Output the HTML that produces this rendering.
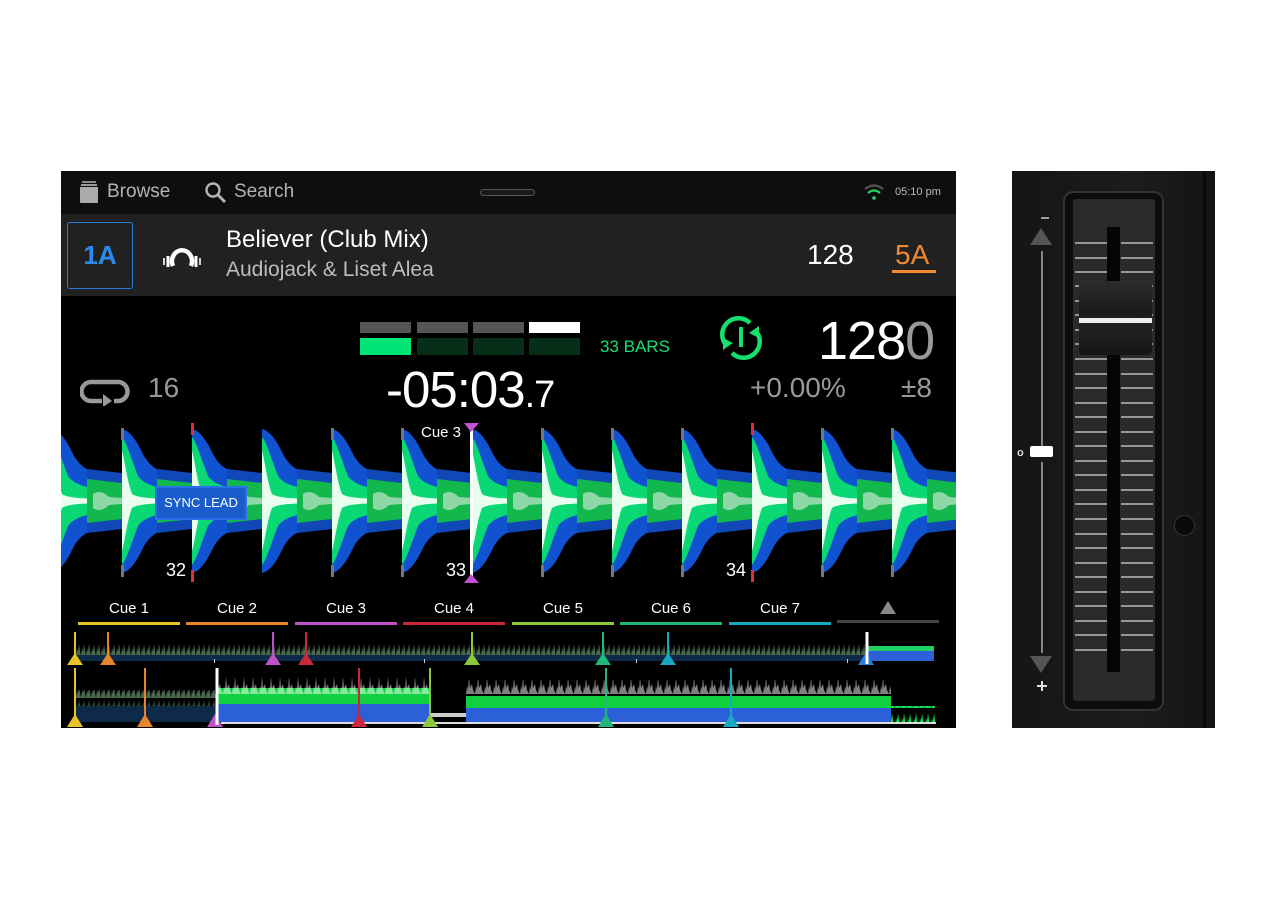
<!DOCTYPE html>
<html><head><meta charset="utf-8"><style>
body{margin:0;width:1280px;height:900px;background:#fff;position:relative;overflow:hidden;font-family:"Liberation Sans","DejaVu Sans",sans-serif}
.a{position:absolute;white-space:nowrap}
</style></head><body>
<div class="a" style="left:61px;top:171px;width:895px;height:557px;background:#000"></div>
<div class="a" style="left:61px;top:171px;width:895px;height:43px;background:#0e0e0e"></div>
<div class="a" style="left:61px;top:214px;width:895px;height:82px;background:#212121"></div>

<!-- header -->
<svg class="a" style="left:78px;top:180px" width="22" height="24"><rect x="4" y="1" width="14" height="2" fill="#888"/><rect x="3" y="4" width="16" height="2" fill="#999"/><rect x="2" y="7" width="18" height="16" rx="1" fill="#aaa"/></svg>
<div class="a" style="left:107px;top:181px;font-size:19px;color:#b4b4b4">Browse</div>
<svg class="a" style="left:204px;top:181px" width="24" height="24"><circle cx="9" cy="9" r="6.5" fill="none" stroke="#b4b4b4" stroke-width="2.4"/><line x1="14" y1="14" x2="21" y2="21" stroke="#b4b4b4" stroke-width="2.8"/></svg>
<div class="a" style="left:234px;top:181px;font-size:19px;color:#b4b4b4">Search</div>
<div class="a" style="left:480px;top:189px;width:53px;height:5px;border:1px solid #555;border-radius:4px;background:#1a1a1a"></div>
<svg class="a" style="left:863px;top:183px" width="22" height="18"><path d="M2 6 Q11 -1 20 6" fill="none" stroke="#555" stroke-width="2.2"/><path d="M5 10 Q11 5 17 10" fill="none" stroke="#1ed760" stroke-width="2.2"/><circle cx="11" cy="15" r="1.8" fill="#1ed760"/></svg>
<div class="a" style="left:895px;top:186px;font-size:11px;color:#bbb">05:10 pm</div>

<!-- track -->
<div class="a" style="left:67px;top:222px;width:66px;height:67px;border:1.5px solid #2a7ad8;border-radius:3px;box-sizing:border-box;color:#2a8af0;font-size:26px;font-weight:bold;line-height:64px;text-align:center">1A</div>
<svg class="a" style="left:160px;top:240px" width="44" height="32"><path d="M13 26 A10 11 0 1 1 31 26" fill="none" stroke="#fff" stroke-width="4.5"/><path d="M8 16 L8 27 M36 16 L36 27" stroke="#fff" stroke-width="3"/><path d="M4 18 L4 25 M40 18 L40 25" stroke="#fff" stroke-width="1.6"/></svg>
<div class="a" style="left:226px;top:226px;font-size:24px;color:#fff">Believer (Club Mix)</div>
<div class="a" style="left:226px;top:258px;font-size:21px;color:#bdbdbd">Audiojack &amp; Liset Alea</div>
<div class="a" style="left:807px;top:239px;font-size:28px;color:#fff">128</div>
<div class="a" style="left:895px;top:239px;font-size:28px;color:#f08a30">5A</div>
<div class="a" style="left:892px;top:270px;width:44px;height:3px;background:#f08a30"></div>

<!-- meters -->
<div class="a" style="left:360px;top:322px;width:51px;height:11px;background:#555"></div>
<div class="a" style="left:417px;top:322px;width:51px;height:11px;background:#555"></div>
<div class="a" style="left:473px;top:322px;width:51px;height:11px;background:#555"></div>
<div class="a" style="left:529px;top:322px;width:51px;height:11px;background:#fff"></div>
<div class="a" style="left:360px;top:338px;width:51px;height:17px;background:#00e676"></div>
<div class="a" style="left:417px;top:338px;width:51px;height:17px;background:#062e18"></div>
<div class="a" style="left:473px;top:338px;width:51px;height:17px;background:#062e18"></div>
<div class="a" style="left:529px;top:338px;width:51px;height:17px;background:#062e18"></div>
<div class="a" style="left:600px;top:337px;font-size:17px;color:#14e070">33 BARS</div>
<svg class="a" style="left:719px;top:316px" width="44" height="44"><path d="M8 30 A16 16 0 0 1 31 7" fill="none" stroke="#14e070" stroke-width="4.5"/><path d="M36 14 A16 16 0 0 1 13 37" fill="none" stroke="#14e070" stroke-width="4.5"/><path d="M40 10 L40 22 L30 17Z" fill="#14e070"/><path d="M4 34 L4 22 L14 27Z" fill="#14e070"/><rect x="20" y="11" width="4" height="20" fill="#14e070"/></svg>
<div class="a" style="left:818px;top:310px;font-size:54px;color:#fff;letter-spacing:-1px">128<span style="color:#999">0</span></div>
<div class="a" style="left:750px;top:372px;font-size:28px;color:#999">+0.00%</div>
<div class="a" style="left:901px;top:372px;font-size:28px;color:#999">±8</div>
<div class="a" style="left:386px;top:360px;font-size:51px;color:#fff;letter-spacing:-1px">-05:03<span style="font-size:38px">.7</span></div>
<svg class="a" style="left:80px;top:374px" width="52" height="32"><path d="M22 27 L11 27 A9 9 0 0 1 11 8 L38 8 A9 9 0 0 1 38 27 L34 27" fill="none" stroke="#999" stroke-width="4.5"/><path d="M23 20 L32 27 L23 33Z" fill="#999"/></svg>
<div class="a" style="left:148px;top:372px;font-size:28px;color:#999">16</div>

<!-- waveform -->
<svg class="a" style="left:61px;top:420px" width="895" height="170">
<defs>
<g id="p">
<path d="M0,-72 C8,-70 14,-62 22,-45 C30,-32 40,-26 70,-24 L70,24 C40,26 30,32 22,45 C14,62 8,70 0,72Z" fill="#1152d0"/>
<path d="M0,-64 C5,-58 10,-40 16,-25 C24,-14 40,-12 70,-11 L70,11 C40,12 24,14 16,25 C10,40 5,58 0,64Z" fill="#0ad874"/>
<path d="M0,-50 C3,-40 5,-20 10,-7 C16,-3 30,-2 70,-2 L70,2 C30,2 16,3 10,7 C5,20 3,40 0,50Z" fill="#e8fff0"/>
</g>
<g id="h">
<path d="M0,-32 L35,-28 L35,28 L0,32Z" fill="#1048b8"/>
<path d="M0,-22 L35,-18 L35,18 L0,22Z" fill="#12b84c"/>
<path d="M6,-7 C10,-10 16,-10 22,-4 L35,-3 L35,3 L22,4 C16,10 10,10 6,7Z" fill="#8ed8a8"/>
</g>
</defs>
<g transform="translate(0,81)">
<use href="#p" x="-9"/><use href="#h" x="26"/>
<use href="#p" x="61"/><use href="#h" x="96"/>
<use href="#p" x="131"/><use href="#h" x="166"/>
<use href="#p" x="201"/><use href="#h" x="236"/>
<use href="#p" x="271"/><use href="#h" x="306"/>
<use href="#p" x="341"/><use href="#h" x="376"/>
<use href="#p" x="411"/><use href="#h" x="446"/>
<use href="#p" x="481"/><use href="#h" x="516"/>
<use href="#p" x="551"/><use href="#h" x="586"/>
<use href="#p" x="621"/><use href="#h" x="656"/>
<use href="#p" x="691"/><use href="#h" x="726"/>
<use href="#p" x="761"/><use href="#h" x="796"/>
<use href="#p" x="831"/><use href="#h" x="866"/>
</g>
<g fill="#777">
<rect x="60" y="8" width="3" height="12"/><rect x="60" y="145" width="3" height="12"/>
<rect x="270" y="8" width="3" height="12"/><rect x="270" y="145" width="3" height="12"/>
<rect x="340" y="8" width="3" height="12"/><rect x="340" y="145" width="3" height="12"/>
<rect x="480" y="8" width="3" height="12"/><rect x="480" y="145" width="3" height="12"/>
<rect x="550" y="8" width="3" height="12"/><rect x="550" y="145" width="3" height="12"/>
<rect x="620" y="8" width="3" height="12"/><rect x="620" y="145" width="3" height="12"/>
<rect x="760" y="8" width="3" height="12"/><rect x="760" y="145" width="3" height="12"/>
<rect x="830" y="8" width="3" height="12"/><rect x="830" y="145" width="3" height="12"/>
</g>
<g fill="#e03030"><rect x="130" y="3" width="3" height="12"/><rect x="130" y="150" width="3" height="12"/><rect x="690" y="3" width="3" height="12"/><rect x="690" y="150" width="3" height="12"/></g>
<rect x="409" y="3" width="3" height="160" fill="#fff"/>
<path d="M403,3 L418,3 L410,12Z M403,163 L418,163 L410,154Z" fill="#c050d8"/>
</svg>
<div class="a" style="left:421px;top:424px;font-size:15px;color:#fff">Cue 3</div>
<div class="a" style="left:166px;top:560px;font-size:18px;color:#fff">32</div>
<div class="a" style="left:446px;top:560px;font-size:18px;color:#fff">33</div>
<div class="a" style="left:726px;top:560px;font-size:18px;color:#fff">34</div>
<div class="a" style="left:155px;top:486px;width:92px;height:34px;background:#1a5ccc;border:2px solid #2a70e8;box-sizing:border-box;color:#fff;font-size:13px;line-height:30px;text-align:center">SYNC LEAD</div>

<!-- cue row -->
<div class="a" style="left:78px;top:600px;width:860px;height:30px;font-size:15px;color:#fff">
<div class="a" style="left:0;width:102px;text-align:center">Cue 1<div style="height:3px;background:#e8c22a;margin-top:5px"></div></div>
<div class="a" style="left:108px;width:102px;text-align:center">Cue 2<div style="height:3px;background:#e8852a;margin-top:5px"></div></div>
<div class="a" style="left:217px;width:102px;text-align:center">Cue 3<div style="height:3px;background:#c050c8;margin-top:5px"></div></div>
<div class="a" style="left:325px;width:102px;text-align:center">Cue 4<div style="height:3px;background:#c8283a;margin-top:5px"></div></div>
<div class="a" style="left:434px;width:102px;text-align:center">Cue 5<div style="height:3px;background:#8cc83a;margin-top:5px"></div></div>
<div class="a" style="left:542px;width:102px;text-align:center">Cue 6<div style="height:3px;background:#20b878;margin-top:5px"></div></div>
<div class="a" style="left:651px;width:102px;text-align:center">Cue 7<div style="height:3px;background:#18a8c0;margin-top:5px"></div></div>
<div class="a" style="left:759px;width:102px;text-align:center"><span style="display:inline-block;width:0;height:0;border-left:8px solid transparent;border-right:8px solid transparent;border-bottom:13px solid #888;margin-top:1px"></span><div style="height:3px;background:#444;margin-top:2px"></div></div>
</div>

<!-- overviews -->
<svg class="a" style="left:61px;top:628px" width="895" height="100">
<defs>
<pattern id="sg" width="5" height="14" patternUnits="userSpaceOnUse"><path d="M0,14 L1,6 L2,10 L3,2 L4,9 L5,14Z" fill="#4a6a50"/></pattern>
<pattern id="sw" width="9" height="22" patternUnits="userSpaceOnUse"><path d="M0,22 L1,14 L2,18 L3,4 L4,16 L6,12 L7,18 L9,22Z" fill="#fff"/></pattern>
<pattern id="sgr" width="6" height="20" patternUnits="userSpaceOnUse"><path d="M0,20 L1,10 L2,14 L3,5 L4,12 L6,20Z" fill="#10e050"/></pattern>
</defs>
<rect x="14" y="16" width="792" height="14" fill="url(#sg)"/>
<rect x="14" y="27" width="792" height="6" fill="#0d2a48"/>
<rect x="806" y="22" width="67" height="11" fill="#2c60d8"/>
<rect x="806" y="18" width="67" height="5" fill="#20d060"/>
<g fill="#ccc"><rect x="153" y="31" width="1" height="4"/><rect x="575" y="31" width="1" height="4"/><rect x="363" y="31" width="1" height="4"/><rect x="786" y="31" width="1" height="4"/></g>
<!-- overview 2 -->
<rect x="14" y="62" width="142" height="22" fill="url(#sg)"/>
<rect x="14" y="78" width="142" height="16" fill="#0d2a48"/>
<rect x="156" y="60" width="214" height="20" fill="#10d040"/>
<rect x="156" y="50" width="214" height="16" fill="url(#sw)" opacity=".5"/>
<rect x="156" y="76" width="214" height="18" fill="#2c60d8"/>
<rect x="370" y="85" width="35" height="4" fill="#ccc"/>
<rect x="405" y="68" width="425" height="14" fill="#10d040"/>
<rect x="405" y="52" width="425" height="18" fill="url(#sw)" opacity=".5"/>
<rect x="405" y="80" width="425" height="14" fill="#2c60d8"/>
<rect x="830" y="78" width="44" height="16" fill="url(#sgr)"/>
<rect x="160" y="94" width="715" height="2" fill="#ddd"/>
<!-- markers -->
<g stroke-width="2">
<line x1="14" y1="4" x2="14" y2="34" stroke="#e8c22a"/><path d="M6,37 L22,37 L14,25Z" fill="#e8c22a"/>
<line x1="47" y1="4" x2="47" y2="34" stroke="#e8852a"/><path d="M39,37 L55,37 L47,25Z" fill="#e8852a"/>
<line x1="212" y1="4" x2="212" y2="34" stroke="#c050c8"/><path d="M204,37 L220,37 L212,25Z" fill="#c050c8"/>
<line x1="245" y1="4" x2="245" y2="34" stroke="#c8283a"/><path d="M237,37 L253,37 L245,25Z" fill="#c8283a"/>
<line x1="411" y1="4" x2="411" y2="34" stroke="#8cc83a"/><path d="M403,37 L419,37 L411,25Z" fill="#8cc83a"/>
<line x1="542" y1="4" x2="542" y2="34" stroke="#20b878"/><path d="M534,37 L550,37 L542,25Z" fill="#20b878"/>
<line x1="607" y1="4" x2="607" y2="34" stroke="#18a8c0"/><path d="M599,37 L615,37 L607,25Z" fill="#18a8c0"/>
<path d="M797,37 L813,37 L805,25Z" fill="#2a80e0"/><line x1="806" y1="4" x2="806" y2="36" stroke="#fff" stroke-width="3"/>
<line x1="14" y1="40" x2="14" y2="96" stroke="#e8c22a"/><path d="M6,99 L22,99 L14,86Z" fill="#e8c22a"/>
<line x1="84" y1="40" x2="84" y2="96" stroke="#e8852a"/><path d="M76,99 L92,99 L84,86Z" fill="#e8852a"/>
<path d="M146,99 L162,99 L154,86Z" fill="#c050c8"/><line x1="156" y1="40" x2="156" y2="97" stroke="#fff" stroke-width="3"/>
<line x1="298" y1="40" x2="298" y2="96" stroke="#c8283a"/><path d="M290,99 L306,99 L298,86Z" fill="#c8283a"/>
<line x1="369" y1="40" x2="369" y2="96" stroke="#8cc83a"/><path d="M361,99 L377,99 L369,86Z" fill="#8cc83a"/>
<line x1="545" y1="40" x2="545" y2="96" stroke="#20b878"/><path d="M537,99 L553,99 L545,86Z" fill="#20b878"/>
<line x1="670" y1="40" x2="670" y2="96" stroke="#18a8c0"/><path d="M662,99 L678,99 L670,86Z" fill="#18a8c0"/>
</g>
</svg>

<!-- fader panel -->
<div class="a" style="left:1012px;top:171px;width:203px;height:557px;background:linear-gradient(90deg,#151515,#1c1c1c 60%,#141414)"></div>
<div class="a" style="left:1203px;top:171px;width:3px;height:557px;background:#0a0a0a"></div>
<div class="a" style="left:1063px;top:191px;width:101px;height:520px;border:2px solid #333;border-radius:10px;box-sizing:border-box;background:#0c0c0c"></div>
<div class="a" style="left:1073px;top:199px;width:82px;height:502px;background:#2a2a2a;border-radius:3px"></div>
<svg class="a" style="left:1073px;top:199px" width="82" height="502">
<g stroke="#bbb" stroke-width="1.5">
<path d="M2 44H34M48 44H80M2 59H34M48 59H80M2 73H34M48 73H80M2 87H34M48 87H80M2 102H34M48 102H80M2 116H34M48 116H80M2 131H34M48 131H80M2 145H34M48 145H80M2 160H34M48 160H80M2 175H34M48 175H80M2 189H34M48 189H80M2 204H34M48 204H80M2 218H34M48 218H80M2 233H34M48 233H80M2 247H34M48 247H80M2 262H34M48 262H80M2 276H34M48 276H80M2 291H34M48 291H80M2 305H34M48 305H80M2 320H34M48 320H80M2 335H34M48 335H80M2 349H34M48 349H80M2 364H34M48 364H80M2 378H34M48 378H80M2 393H34M48 393H80M2 407H34M48 407H80M2 422H34M48 422H80M2 436H34M48 436H80M2 451H34M48 451H80"/>
</g>
<rect x="34" y="28" width="13" height="445" fill="#050505"/>
</svg>
<div class="a" style="left:1079px;top:281px;width:73px;height:74px;background:linear-gradient(#2c2c2c,#1a1a1a 40%,#222 60%,#161616);border-radius:4px"></div>
<div class="a" style="left:1079px;top:318px;width:73px;height:5px;background:#eee"></div>
<svg class="a" style="left:1016px;top:210px" width="40" height="484">
<path d="M25 8 H33" stroke="#ccc" stroke-width="1.5"/>
<path d="M14 35 L25 18 L36 35Z" fill="#555"/>
<line x1="26" y1="41" x2="26" y2="238" stroke="#aaa" stroke-width="1.5"/>
<rect x="14" y="236" width="23" height="11" rx="2" fill="#fff"/>
<text x="1" y="246" font-size="11" fill="#ddd" font-family="Liberation Sans" font-weight="bold">o</text>
<line x1="26" y1="252" x2="26" y2="443" stroke="#aaa" stroke-width="1.5"/>
<path d="M14 446 L25 463 L36 446Z" fill="#555"/>
<path d="M26 471 V481 M21 476 H31" stroke="#ddd" stroke-width="2"/>
</svg>
<div class="a" style="left:1174px;top:515px;width:19px;height:19px;border-radius:50%;background:#0a0a0a;border:1px solid #333"></div>
</body></html>
